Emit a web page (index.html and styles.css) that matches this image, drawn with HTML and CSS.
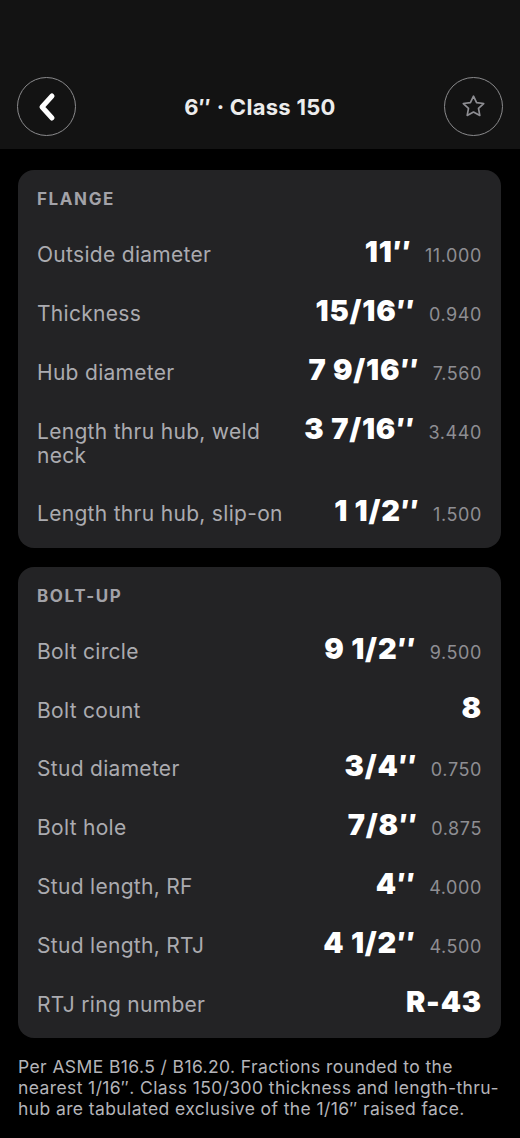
FILE: index.html
```html
<!DOCTYPE html>
<html lang="en">
<head>
    <meta charset="UTF-8">
    <meta name="viewport" content="width=device-width, initial-scale=1.0">
    <title>6″ · Class 150</title>
    <link rel="stylesheet" href="styles.css">
</head>
<body>
    <header class="topBar">
        <button class="roundButton" aria-label="Back">
            <svg width="22" height="32" viewBox="0 0 22 32">
                <polyline points="16,5 6,16 16,27" fill="none" stroke="#fff" stroke-width="5" stroke-linecap="round" stroke-linejoin="round"/>
            </svg>
        </button>
        <h1 class="topTitle">6″ · Class 150</h1>
        <button class="roundButton" aria-label="Favorite">
            <svg width="27" height="27" viewBox="0 0 24 24">
                <path d="M12 2.8l2.75 5.75 6.3.8-4.6 4.35 1.15 6.25L12 16.9l-5.6 3.05 1.15-6.25-4.6-4.35 6.3-.8z" fill="none" stroke="#8e8e93" stroke-width="1.5" stroke-linejoin="round"/>
            </svg>
        </button>
    </header>

    <main class="content">
        <section class="specCard">
            <h2 class="cardTitle">FLANGE</h2>
            <div class="specRow">
                <span class="specLabel">Outside diameter</span>
                <span class="specValue">11″<span class="specDecimal">11.000</span></span>
            </div>
            <div class="specRow">
                <span class="specLabel">Thickness</span>
                <span class="specValue">15/16″<span class="specDecimal">0.940</span></span>
            </div>
            <div class="specRow">
                <span class="specLabel">Hub diameter</span>
                <span class="specValue">7 9/16″<span class="specDecimal">7.560</span></span>
            </div>
            <div class="specRow">
                <span class="specLabel">Length thru hub, weld neck</span>
                <span class="specValue">3 7/16″<span class="specDecimal">3.440</span></span>
            </div>
            <div class="specRow">
                <span class="specLabel">Length thru hub, slip-on</span>
                <span class="specValue">1 1/2″<span class="specDecimal">1.500</span></span>
            </div>
        </section>

        <section class="specCard">
            <h2 class="cardTitle">BOLT-UP</h2>
            <div class="specRow">
                <span class="specLabel">Bolt circle</span>
                <span class="specValue">9 1/2″<span class="specDecimal">9.500</span></span>
            </div>
            <div class="specRow">
                <span class="specLabel">Bolt count</span>
                <span class="specValue">8</span>
            </div>
            <div class="specRow">
                <span class="specLabel">Stud diameter</span>
                <span class="specValue">3/4″<span class="specDecimal">0.750</span></span>
            </div>
            <div class="specRow">
                <span class="specLabel">Bolt hole</span>
                <span class="specValue">7/8″<span class="specDecimal">0.875</span></span>
            </div>
            <div class="specRow">
                <span class="specLabel">Stud length, RF</span>
                <span class="specValue">4″<span class="specDecimal">4.000</span></span>
            </div>
            <div class="specRow">
                <span class="specLabel">Stud length, RTJ</span>
                <span class="specValue">4 1/2″<span class="specDecimal">4.500</span></span>
            </div>
            <div class="specRow">
                <span class="specLabel">RTJ ring number</span>
                <span class="specValue">R-43</span>
            </div>
        </section>

        <p class="footNote">Per ASME B16.5 / B16.20. Fractions rounded to the nearest 1/16″. Class 150/300 thickness and length-thru-hub are tabulated exclusive of the 1/16″ raised face.</p>
    </main>
</body>
</html>
```

FILE: styles.css
```css
* {
  box-sizing: border-box;
  margin: 0;
  padding: 0;
}

body {
  background-color: #000;
  font-family: "Inter", "Liberation Sans", sans-serif;
  color: #fff;
  -webkit-font-smoothing: antialiased;
}

.topBar {
  height: 149px;
  padding: 77px 17px 13px;
  background-color: #131313;
  display: flex;
  align-items: center;
  justify-content: space-between;
}

.roundButton {
  width: 59px;
  height: 59px;
  border-radius: 50%;
  border: 1.5px solid #8a8a8c;
  background: transparent;
  display: flex;
  align-items: center;
  justify-content: center;
}

.roundButton svg {
  display: block;
}

.topTitle {
  font-size: 22px;
  font-weight: 700;
  color: #ececec;
  letter-spacing: 0.3px;
}

.content {
  padding: 21px 19px 0 18px;
}

.specCard {
  background-color: #232325;
  border-radius: 16px;
  padding: 19px 19px 6px;
  margin-bottom: 19px;
}

.cardTitle {
  font-size: 17px;
  line-height: 20px;
  font-weight: 700;
  letter-spacing: 1.6px;
  color: #a2a2a8;
  margin-bottom: 15px;
}

.specRow {
  display: flex;
  align-items: baseline;
  justify-content: space-between;
  gap: 16px;
  padding: 15px 0;
}

.specLabel {
  font-size: 21px;
  line-height: 24px;
  letter-spacing: 0.3px;
  color: #ababb0;
  max-width: 256px;
}

.specValue {
  font-size: 29px;
  line-height: 25px;
  font-weight: 900;
  letter-spacing: 0.8px;
  color: #fff;
  white-space: nowrap;
}

.specDecimal {
  font-size: 18px;
  font-weight: 400;
  letter-spacing: 0.6px;
  color: #8e8e93;
  margin-left: 13px;
}

.footNote {
  margin-top: -1px;
  font-size: 17.5px;
  line-height: 21px;
  letter-spacing: 0.4px;
  color: #b4b4b9;
}
```
